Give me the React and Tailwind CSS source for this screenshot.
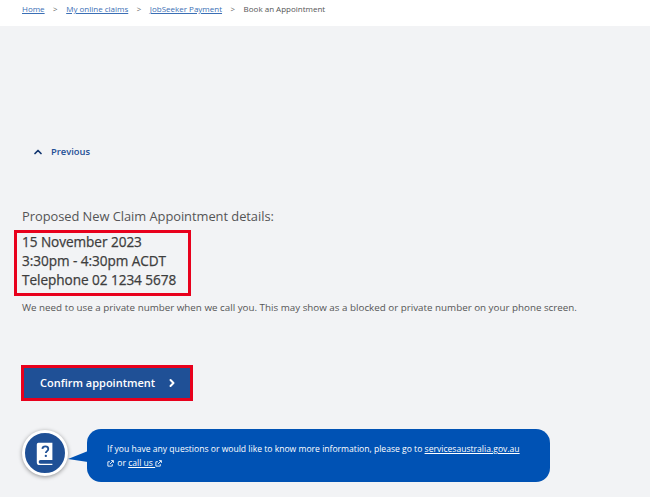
import React from 'react';
import { ChevronUp, ChevronRight } from 'lucide-react';

const ExternalIcon = () => (
  <svg viewBox="0 0 12 12" className="inline-block w-[7px] h-[7px] align-[-1px]" fill="none" stroke="currentColor" strokeWidth="1.5">
    <path d="M9 7v3.5H1.5V3H5" />
    <path d="M5 7l5.5-5.5M7 1h4v4" />
  </svg>
);

const Crumb = ({ children }) => (
  <a href="#" className="text-[#3b6fb5] underline">{children}</a>
);

const Sep = () => <span className="text-[#666] mx-[8.5px]">&gt;</span>;

export default function App() {
  return (
    <div className="w-[650px] h-[497px] overflow-hidden bg-[#f2f3f5] font-['Open_Sans','Noto_Sans',sans-serif] text-[#4a4a4a]">
      {/* breadcrumb */}
      <div className="h-[26px] bg-white pl-[22px] pt-[2px] text-[8px] leading-[13px]">
        <Crumb>Home</Crumb>
        <Sep />
        <Crumb>My online claims</Crumb>
        <Sep />
        <Crumb>JobSeeker Payment</Crumb>
        <Sep />
        <span className="text-[#555]">Book an Appointment</span>
      </div>

      <div className="pl-[22px]">
        {/* previous */}
        <a href="#" className="flex items-center mt-[118px] ml-[10px] h-[16px] text-[9.4px] font-semibold text-[#1f4f96]">
          <ChevronUp size={12} strokeWidth={3.5} className="text-[#12356f]" />
          <span className="ml-[7px]">Previous</span>
        </a>

        <h2 className="mt-[46px] text-[12.9px] tracking-[-0.05px] leading-[20px] font-normal text-[#555]">
          Proposed New Claim Appointment details:
        </h2>

        {/* appointment details */}
        <div className="mt-[4px] -ml-[8px] w-[177px] h-[66px] border-[3px] border-[#e8001c] pl-[5px] text-[13.6px] leading-[19px] font-medium tracking-[-0.05px] text-[#3d3d3d] [-webkit-text-stroke:0.25px_#3d3d3d]">
          <div className="-mt-[1px]">15 November 2023</div>
          <div>3:30pm - 4:30pm ACDT</div>
          <div>Telephone 02 1234 5678</div>
        </div>

        <p className="mt-[5px] text-[9.8px] leading-[14px] text-[#555]">
          We need to use a private number when we call you. This may show as a blocked or private number on your phone screen.
        </p>

        {/* confirm */}
        <div className="mt-[50px] -ml-[1px] w-[172px] h-[36px] border-[3px] border-[#e8001c]">
          <button className="w-full h-full bg-[#1f5096] flex items-center pl-[16px] text-white text-[11px] font-semibold">
            Confirm appointment
            <ChevronRight size={12} strokeWidth={4} className="ml-[11px]" />
          </button>
        </div>

        {/* help bubble */}
        <div className="mt-[28px] flex items-start">
          <div className="relative z-10 mt-[1px] w-[46px] h-[46px] rounded-full bg-[#1f5096] border-[3px] border-white shadow-[0_1px_4px_rgba(0,0,0,0.4)] flex items-center justify-center shrink-0">
            <svg viewBox="0 0 24 28" className="w-[20px] h-[23px]">
              <path d="M4 1h17v21H6.5a2.2 2.2 0 0 0 0 4.4H21V28H5.5A3.5 3.5 0 0 1 2 24.5V3a2 2 0 0 1 2-2z" fill="#fff" />
              <path d="M8.8 8.4c.2-2 1.7-3 3.6-3 2 0 3.6 1.2 3.6 3.1 0 2.6-3 2.6-3 5" fill="none" stroke="#1f5096" strokeWidth="2.2" />
              <circle cx="13" cy="16.9" r="1.4" fill="#1f5096" />
            </svg>
          </div>
          <div className="relative ml-[19px] w-[463px] h-[53px] rounded-[14px] bg-[#0052b4] pl-[20px] pt-[13px] text-[8.58px] leading-[14px] text-white">
            <span className="absolute -left-[19px] top-[22px] w-0 h-0 border-t-[8px] border-t-transparent border-r-[20px] border-r-[#0052b4] border-b-[3px] border-b-transparent" />
            If you have any questions or would like to know more information, please go to <a href="#" className="underline">servicesaustralia.gov.au</a>
            <div>
              <ExternalIcon /> <span className="ml-[1px]">or</span> <a href="#" className="underline">call us </a> <ExternalIcon />
            </div>
          </div>
        </div>
      </div>
    </div>
  );
}
